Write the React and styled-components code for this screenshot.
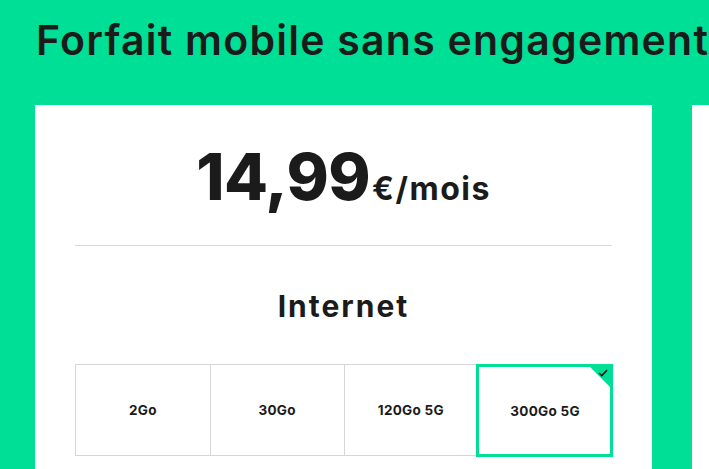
import styled, { createGlobalStyle } from 'styled-components'

const GlobalStyle = createGlobalStyle`
  html, body {
    margin: 0;
    padding: 0;
    background: #00df96;
    overflow: hidden;
  }
  body {
    font-family: Inter, "Liberation Sans", sans-serif;
    color: #1b1b1b;
  }
`

const Page = styled.div`
  width: 709px;
  height: 469px;
  overflow: hidden;
  background: #00df96;
`

const Title = styled.h1`
  margin: 0;
  padding: 16px 0 0 36px;
  height: 105px;
  box-sizing: border-box;
  font-size: 41px;
  line-height: 48px;
  font-weight: 600;
  white-space: nowrap;
  letter-spacing: 1.25px;
`

const CardsRow = styled.div`
  display: flex;
  gap: 40px;
  padding-left: 35px;
`

const Card = styled.div`
  flex: 0 0 617px;
  height: 364px;
  background: #fff;
  box-sizing: border-box;
  padding: 40px 40px 0;
  display: flex;
  flex-direction: column;
`

const Price = styled.div`
  display: flex;
  justify-content: center;
  align-items: baseline;
  gap: 2px;
  height: 64px;
  line-height: 64px;
`

const Amount = styled.span`
  font-size: 64px;
  font-weight: 800;
  letter-spacing: -0.5px;
`

const Unit = styled.span`
  font-size: 32px;
  font-weight: 700;
  letter-spacing: 1.5px;
`

const Divider = styled.hr`
  margin: 36px 0 0;
  border: 0;
  border-top: 1px solid #d9d9d9;
`

const Section = styled.h2`
  margin: 40px 0 0;
  text-align: center;
  font-size: 30px;
  line-height: 40px;
  font-weight: 700;
  letter-spacing: 2px;
`

const Options = styled.div`
  display: grid;
  grid-template-columns: repeat(4, 1fr);
  margin-top: 38px;
  height: 92px;
  border: 1px solid #d6d6d6;
  box-sizing: border-box;
`

const Option = styled.div`
  position: relative;
  display: flex;
  align-items: center;
  justify-content: center;
  font-size: 13.5px;
  font-weight: 700;
  letter-spacing: 0.3px;
  border-left: ${p => (p.$first ? '0' : '1px solid #d6d6d6')};
  outline: ${p => (p.$selected ? '3px solid #00df96' : 'none')};
  outline-offset: -2px;
  margin: ${p => (p.$selected ? '0 -1px -1px 0' : '0')};
`

const Corner = styled.span`
  position: absolute;
  top: 0;
  right: 0;
  width: 0;
  height: 0;
  border-top: 24px solid #00df96;
  border-left: 24px solid transparent;
`

const Check = styled.svg`
  position: absolute;
  top: 4px;
  right: 4px;
  width: 10px;
  height: 8px;
`

const options = ['2Go', '30Go', '120Go 5G', '300Go 5G']

export default function App() {
  return (
    <Page>
      <GlobalStyle />
      <Title>Forfait mobile sans engagement</Title>
      <CardsRow>
        <Card>
          <Price>
            <Amount>14,99</Amount>
            <Unit>€/mois</Unit>
          </Price>
          <Divider />
          <Section>Internet</Section>
          <Options>
            {options.map((o, i) => (
              <Option key={o} $first={i === 0} $selected={i === 3}>
                {o}
                {i === 3 && (
                  <>
                    <Corner />
                    <Check viewBox="0 0 10 8">
                      <path d="M1 4 L3.8 6.6 L9 1.2" fill="none" stroke="#1b1b1b" strokeWidth="1.7" />
                    </Check>
                  </>
                )}
              </Option>
            ))}
          </Options>
        </Card>
        <Card />
      </CardsRow>
    </Page>
  )
}
